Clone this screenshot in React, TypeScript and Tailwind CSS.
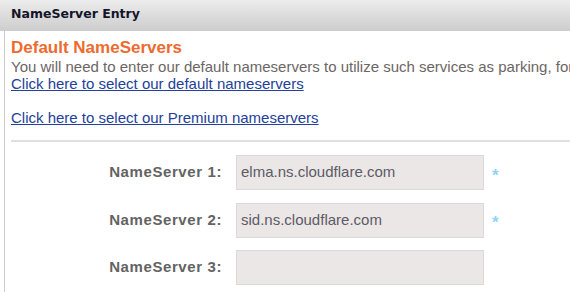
import React from "react";

const rows = [
  { label: "NameServer 1:", value: "elma.ns.cloudflare.com", req: true },
  { label: "NameServer 2:", value: "sid.ns.cloudflare.com", req: true },
  { label: "NameServer 3:", value: "", req: false },
];

export default function App() {
  return (
    <div className="w-[570px] h-[292px] overflow-hidden bg-white font-['Liberation_Sans',Arial,sans-serif]">
      <div className="h-[31px] flex items-center pl-[11px] pb-[2px] bg-gradient-to-b from-[#ededed] via-[#dcdcdc] to-[#cdcdcd]">
        <span className="text-[12.5px] font-bold text-[#14142a] font-['DejaVu_Sans',sans-serif]">NameServer Entry</span>
      </div>
      <div className="ml-[4px] border-l border-[#cccccc] pl-[6px] h-[261px] overflow-hidden">
        <h2 className="mt-[7px] text-[17px] leading-[20px] font-bold text-[#ee6a2f]">Default NameServers</h2>
        <div className="text-[15px] leading-[17px] whitespace-nowrap">
          <div className="text-[#6b6664]">You will need to enter our default nameservers to utilize such services as parking, forwarding</div>
          <div><a className="text-[#23409a] underline">Click here to select our default nameservers</a></div>
          <div className="h-[17px]"></div>
          <div><a className="text-[#23409a] underline">Click here to select our Premium nameservers</a></div>
        </div>
        <div className="mt-[14px] h-[2px] bg-[#e0e0e0] w-[600px]"></div>
        <div className="mt-[13px] flex flex-col gap-[12.5px]">
          {rows.map((r) => (
            <div key={r.label} className="flex items-center">
              <div className="w-[211px] text-right text-[15px] font-bold text-[#636363] tracking-[0.6px]">{r.label}</div>
              <div className="ml-[14px] w-[248px] h-[35px] bg-[#ebe7e6] border border-[#dcd8d7] flex items-center pl-[4px] text-[15px] text-[#5b5b66]">
                {r.value}
              </div>
              {r.req && <span className="ml-[8px] mt-[5px] text-[17px] font-bold text-[#93d3f3] leading-none">*</span>}
            </div>
          ))}
        </div>
      </div>
    </div>
  );
}
